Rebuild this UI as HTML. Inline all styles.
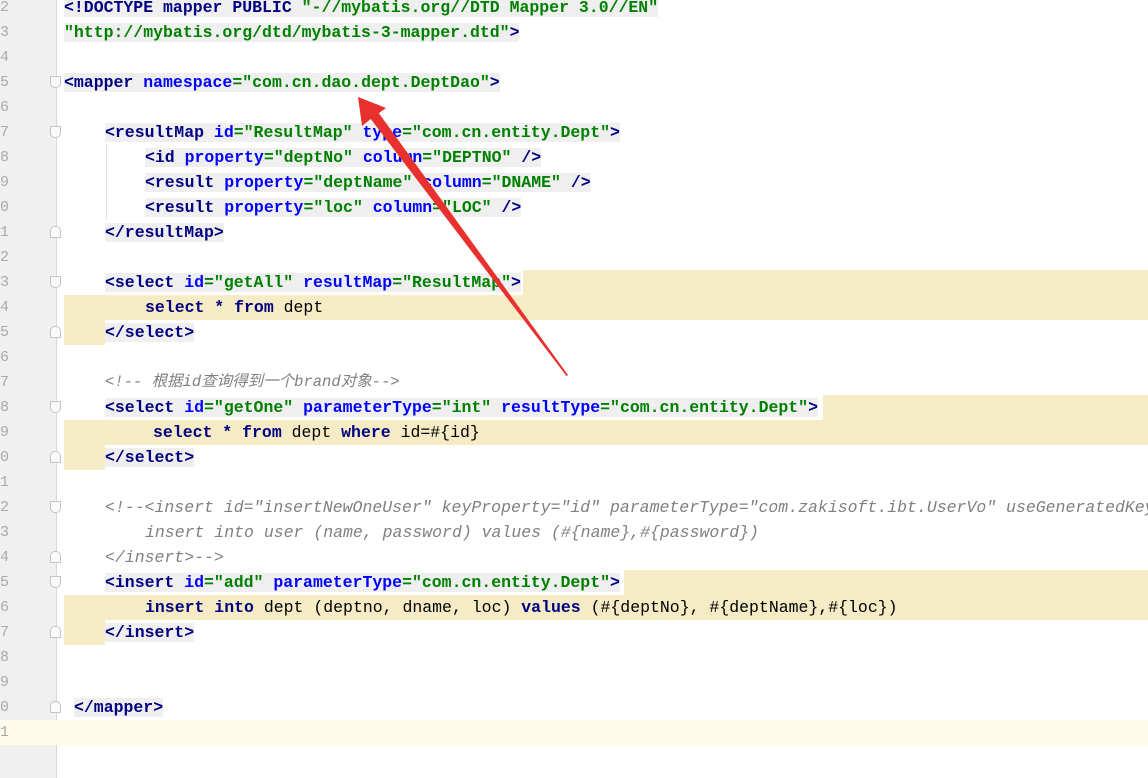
<!DOCTYPE html>
<html><head><meta charset="utf-8"><style>
body{margin:0;width:1148px;height:778px;overflow:hidden;background:#fff;position:relative;font-family:"Liberation Mono","Noto Sans CJK SC",monospace;font-size:16.5px}
.g{position:absolute;left:0;top:0;width:56px;height:778px;background:#f0f0f0;border-right:1px solid #d8d8d8}
.ln{position:absolute;left:0;width:14px;color:#aaa;font-size:15px;text-align:left;height:25px;line-height:25px}
.l{position:absolute;left:0;height:25px;line-height:25px;white-space:pre}
.b{position:absolute;height:25px}
.t{color:#000080;font-weight:bold}.a{color:#0000ff;font-weight:bold}.v{color:#008000;font-weight:bold}
.c{color:#808080;font-style:italic}
.k{color:#000080;font-weight:bold}
.gr{background:#efefef}
.fold{position:absolute;left:50px;width:11px;height:12px;border:1px solid #c4c4c4;background:#fafafa;box-sizing:border-box;border-radius:0 0 5px 5px}
.fold.e{border-radius:5px 5px 0 0}
</style></head><body>
<div class="g"></div>
<div class="b" style="top:720px;left:0;width:1148px;background:#fefbea"></div>
<div class="b" style="top:270px;left:523px;width:625px;background:#f5ebc4"></div>
<div class="b" style="top:295px;left:64px;width:1084px;background:#f5ebc4"></div>
<div class="b" style="top:320px;left:64px;width:41px;background:#f5ebc4"></div>
<div class="b" style="top:395px;left:823px;width:325px;background:#f5ebc4"></div>
<div class="b" style="top:420px;left:64px;width:1084px;background:#f5ebc4"></div>
<div class="b" style="top:445px;left:64px;width:41px;background:#f5ebc4"></div>
<div class="b" style="top:570px;left:624px;width:524px;background:#f5ebc4"></div>
<div class="b" style="top:595px;left:64px;width:1084px;background:#f5ebc4"></div>
<div class="b" style="top:620px;left:64px;width:41px;background:#f5ebc4"></div>
<div class="b" style="top:145px;left:106px;width:1px;background:#e0e0e0;height:75px"></div>

<div class="ln" style="top:-5px">2</div><div class="ln" style="top:20px">3</div><div class="ln" style="top:45px">4</div><div class="ln" style="top:70px">5</div><div class="ln" style="top:95px">6</div><div class="ln" style="top:120px">7</div><div class="ln" style="top:145px">8</div><div class="ln" style="top:170px">9</div><div class="ln" style="top:195px">0</div><div class="ln" style="top:220px">1</div><div class="ln" style="top:245px">2</div><div class="ln" style="top:270px">3</div><div class="ln" style="top:295px">4</div><div class="ln" style="top:320px">5</div><div class="ln" style="top:345px">6</div><div class="ln" style="top:370px">7</div><div class="ln" style="top:395px">8</div><div class="ln" style="top:420px">9</div><div class="ln" style="top:445px">0</div><div class="ln" style="top:470px">1</div><div class="ln" style="top:495px">2</div><div class="ln" style="top:520px">3</div><div class="ln" style="top:545px">4</div><div class="ln" style="top:570px">5</div><div class="ln" style="top:595px">6</div><div class="ln" style="top:620px">7</div><div class="ln" style="top:645px">8</div><div class="ln" style="top:670px">9</div><div class="ln" style="top:695px">0</div><div class="ln" style="top:720px">1</div>

<div class="fold" style="top:76px"></div><div class="fold" style="top:126px"></div><div class="fold e" style="top:226px"></div><div class="fold" style="top:276px"></div><div class="fold e" style="top:326px"></div><div class="fold" style="top:401px"></div><div class="fold e" style="top:451px"></div><div class="fold" style="top:501px"></div><div class="fold e" style="top:551px"></div><div class="fold" style="top:576px"></div><div class="fold e" style="top:626px"></div><div class="fold e" style="top:701px"></div>

<div class="l" style="top:-5px;left:64px"><span class="gr"><span class="t">&lt;!DOCTYPE mapper PUBLIC </span><span class="v">"-//mybatis.org//DTD Mapper 3.0//EN"</span></span></div>
<div class="l" style="top:20px;left:64px"><span class="gr"><span class="v">"http://mybatis.org/dtd/mybatis-3-mapper.dtd"</span><span class="t">&gt;</span></span></div>
<div class="l" style="top:70px;left:64px"><span class="gr"><span class="t">&lt;mapper </span><span class="a">namespace</span><span class="v">="com.cn.dao.dept.DeptDao"</span><span class="t">&gt;</span></span></div>
<div class="l" style="top:120px;left:105px"><span class="gr"><span class="t">&lt;resultMap </span><span class="a">id</span><span class="v">="ResultMap" </span><span class="a">type</span><span class="v">="com.cn.entity.Dept"</span><span class="t">&gt;</span></span></div>
<div class="l" style="top:145px;left:145px"><span class="gr"><span class="t">&lt;id </span><span class="a">property</span><span class="v">="deptNo" </span><span class="a">column</span><span class="v">="DEPTNO" </span><span class="t">/&gt;</span></span></div>
<div class="l" style="top:170px;left:145px"><span class="gr"><span class="t">&lt;result </span><span class="a">property</span><span class="v">="deptName" </span><span class="a">column</span><span class="v">="DNAME" </span><span class="t">/&gt;</span></span></div>
<div class="l" style="top:195px;left:145px"><span class="gr"><span class="t">&lt;result </span><span class="a">property</span><span class="v">="loc" </span><span class="a">column</span><span class="v">="LOC" </span><span class="t">/&gt;</span></span></div>
<div class="l" style="top:220px;left:105px"><span class="gr"><span class="t">&lt;/resultMap&gt;</span></span></div>
<div class="l" style="top:270px;left:105px"><span class="gr"><span class="t">&lt;select </span><span class="a">id</span><span class="v">="getAll" </span><span class="a">resultMap</span><span class="v">="ResultMap"</span><span class="t">&gt;</span></span></div>
<div class="l" style="top:295px;left:145px"><span class="k">select * from </span>dept</div>
<div class="l" style="top:320px;left:105px"><span class="gr"><span class="t">&lt;/select&gt;</span></span></div>
<div class="l c" style="top:370px;left:105px;font-size:15.5px">&lt;!-- 根据<i>id</i>查询得到一个<i>brand</i>对象--&gt;</div>
<div class="l" style="top:395px;left:105px"><span class="gr"><span class="t">&lt;select </span><span class="a">id</span><span class="v">="getOne" </span><span class="a">parameterType</span><span class="v">="int" </span><span class="a">resultType</span><span class="v">="com.cn.entity.Dept"</span><span class="t">&gt;</span></span></div>
<div class="l" style="top:420px;left:153px"><span class="k">select * from </span>dept <span class="k">where </span>id=#{id}</div>
<div class="l" style="top:445px;left:105px"><span class="gr"><span class="t">&lt;/select&gt;</span></span></div>
<div class="l c" style="top:495px;left:105px">&lt;!--&lt;insert id="insertNewOneUser" keyProperty="id" parameterType="com.zakisoft.ibt.UserVo" useGeneratedKeys</div>
<div class="l c" style="top:520px;left:145px">insert into user (name, password) values (#{name},#{password})</div>
<div class="l c" style="top:545px;left:105px">&lt;/insert&gt;--&gt;</div>
<div class="l" style="top:570px;left:105px"><span class="gr"><span class="t">&lt;insert </span><span class="a">id</span><span class="v">="add" </span><span class="a">parameterType</span><span class="v">="com.cn.entity.Dept"</span><span class="t">&gt;</span></span></div>
<div class="l" style="top:595px;left:145px"><span class="k">insert into </span>dept (deptno, dname, loc) <span class="k">values </span>(#{deptNo}, #{deptName},#{loc})</div>
<div class="l" style="top:620px;left:105px"><span class="gr"><span class="t">&lt;/insert&gt;</span></span></div>
<div class="l" style="top:695px;left:74px"><span class="gr"><span class="t">&lt;/mapper&gt;</span></span></div>

<svg style="position:absolute;left:0;top:0" width="1148" height="778">
<polygon points="568,375 566.5,376 370,118 378,112" fill="#e8312f"/>
<polygon points="358,97 386,108 372,118 362,126" fill="#e8312f"/>
</svg>
</body></html>
